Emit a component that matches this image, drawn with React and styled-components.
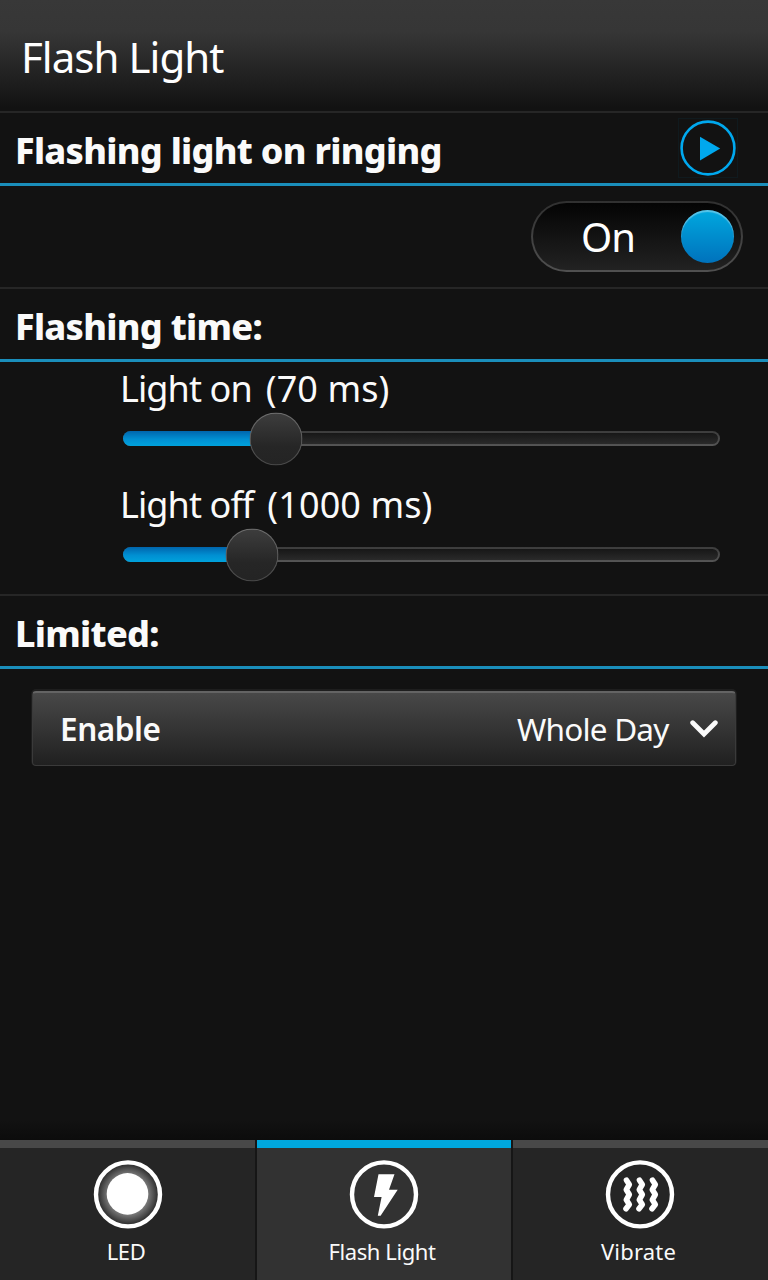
import React, { useState } from 'react';
import styled, { createGlobalStyle } from 'styled-components';

const sliders = [
    {id: 'on', name: 'Light on', value: '(70 ms)', percent: 25.4},
    {id: 'off', name: 'Light off', value: '(1000 ms)', percent: 21.5},
];

const LedIcon = () => (
    <svg width='70' height='70' viewBox='0 0 70 70'>
        <defs>
            <radialGradient id='glow'>
                <stop offset='0.62' stopColor='#7c7c7c' />
                <stop offset='0.95' stopColor='#2c2c2c' />
            </radialGradient>
        </defs>
        <circle cx='35' cy='35.4' r='32' fill='url(#glow)' stroke='#fff' strokeWidth='4.4' />
        <circle cx='34.5' cy='34.9' r='20.8' fill='#fff' />
    </svg>
);

const FlashIcon = () => (
    <svg width='70' height='70' viewBox='0 0 70 70'>
        <circle cx='35' cy='35.4' r='32' fill='none' stroke='#fff' strokeWidth='4.4' />
        <path d='M29.5 15.2 H45.5 L40 30.8 H48.7 L31.6 56.7 H28.8 L32.6 37.9 H25 Z' fill='#fff' />
    </svg>
);

const VibrateIcon = () => (
    <svg width='70' height='70' viewBox='0 0 70 70'>
        <circle cx='35' cy='35.4' r='32' fill='none' stroke='#fff' strokeWidth='4.4' />
        {[0, 13, 26].map(x =>
            <path
                key={x}
                d='M21.5 21.2 L24.3 25.5 L21.3 30.7 L24.3 35.5 L21.3 40.8 L24.3 45.5 L21 49.8'
                transform={`translate(${x} 0)`}
                fill='none'
                stroke='#fff'
                strokeWidth='5.6'
                strokeLinecap='round'
                strokeLinejoin='round'
            />
        )}
    </svg>
);

const tabs = [
    {name: 'LED', icon: LedIcon, spacing: '-0.4px', shift: '3px'},
    {name: 'Flash Light', icon: FlashIcon, spacing: '-0.4px', shift: '4px'},
    {name: 'Vibrate', icon: VibrateIcon, spacing: '0.2px', shift: '3px'},
];

const App = () => {
    const [active, setActive] = useState('Flash Light');

    return (
        <Page>
            <GlobalStyle />
            <Header>
                <Title>Flash Light</Title>
            </Header>
            <SectionHeader>
                <SectionTitle>Flashing light on ringing</SectionTitle>
                <PlayButton aria-label='Play'>
                    <svg width='60' height='60' viewBox='0 0 60 60'>
                        <circle cx='30' cy='30' r='26.4' fill='none' stroke='#00a8ee' strokeWidth='2.6' />
                        <path d='M22 18.8 L42.2 30.5 L22 42.5 Z' fill='#00a8ee' />
                    </svg>
                </PlayButton>
            </SectionHeader>
            <ToggleRow>
                <Toggle>
                    <ToggleLabel>On</ToggleLabel>
                    <ToggleKnob />
                </Toggle>
            </ToggleRow>
            <SectionHeader>
                <SectionTitle>Flashing time:</SectionTitle>
            </SectionHeader>
            <SliderList>
                {sliders.map(s =>
                    <SliderItem key={s.id}>
                        <SliderLabel>
                            <SliderName>{s.name}</SliderName>
                            <SliderValue>{s.value}</SliderValue>
                        </SliderLabel>
                        <Track>
                            <Fill style={{width: `${s.percent}%`}} />
                            <Thumb style={{left: `${s.percent}%`}} />
                        </Track>
                    </SliderItem>
                )}
            </SliderList>
            <SectionHeader>
                <SectionTitle>Limited:</SectionTitle>
            </SectionHeader>
            <Dropdown>
                <DropdownName>Enable</DropdownName>
                <DropdownValue>Whole Day</DropdownValue>
                <svg width='28' height='18' viewBox='0 0 28 18'>
                    <path d='M2.7 2.8 L14 14 L25.3 2.8' fill='none' stroke='#fafafa' strokeWidth='4.8' strokeLinecap='round' />
                </svg>
            </Dropdown>
            <Spacer />
            <TabBar>
                {tabs.map(({name, icon: Icon, spacing, shift}) =>
                    <Tab key={name} $active={name === active} onClick={() => setActive(name)}>
                        <Icon />
                        <TabName $spacing={spacing} $shift={shift}>{name}</TabName>
                    </Tab>
                )}
            </TabBar>
        </Page>
    );
};

const GlobalStyle = createGlobalStyle`
    body {
        margin: 0;
        background: #121212;
    }

    * {
        box-sizing: border-box;
    }

    svg {
        display: block;
        flex: none;
    }
`;

const Page = styled.div`
    display: flex;
    flex-direction: column;
    width: 768px;
    height: 1280px;
    overflow: hidden;
    background: #121212;
    color: #fafafa;
    font-family: 'Noto Sans', 'Open Sans', sans-serif;
    white-space: nowrap;
`;

const Header = styled.header`
    height: 111px;
    padding: 28px 0 0 21px;
    background: linear-gradient(#383838 0, #363636 32px, #121212 108px);
`;

const Title = styled.h1`
    margin: 0;
    font-size: 42px;
    line-height: 57px;
    font-weight: 400;
    letter-spacing: -0.95px;
    color: #fff;
`;

const SectionHeader = styled.div`
    display: flex;
    justify-content: space-between;
    height: 75px;
    padding: 5px 30px 0 15px;
    border-top: 2px solid #262626;
    border-bottom: 3px solid #1a8ebb;
`;

const SectionTitle = styled.h2`
    margin: 0;
    font-size: 36px;
    line-height: 66px;
    font-weight: 800;
    letter-spacing: -0.7px;
`;

const PlayButton = styled.button`
    width: 60px;
    height: 60px;
    padding: 0;
    border: none;
    background: none;
    box-shadow: inset 0 0 0 1px #101a1e;
`;

const ToggleRow = styled.div`
    display: flex;
    justify-content: flex-end;
    height: 101px;
    padding: 15px 25px 0 0;
`;

const Toggle = styled.div`
    display: flex;
    align-items: center;
    justify-content: space-between;
    width: 212px;
    height: 71px;
    padding: 0 7px 0 48px;
    border: 2px solid transparent;
    border-radius: 36px;
    background:
        linear-gradient(#040404, #222) padding-box,
        linear-gradient(#303030, #505050) border-box;
`;

const ToggleLabel = styled.span`
    font-size: 40px;
    line-height: 54px;
    letter-spacing: -1px;
    color: #fff;
`;

const ToggleKnob = styled.div`
    width: 53px;
    height: 53px;
    border-radius: 50%;
    background: linear-gradient(#00a8df, #0072bc);
    box-shadow: inset 0 2px 1px rgba(255, 255, 255, 0.35);
`;

const SliderList = styled.div`
    height: 232px;
    padding: 0 48px 0 121px;
`;

const SliderItem = styled.div`
    height: 116px;
    padding-left: 2px;
`;

const SliderLabel = styled.div`
    display: flex;
    height: 69px;
    margin-left: -3px;
    padding-top: 3px;
    font-size: 36px;
    line-height: 48px;
`;

const SliderName = styled.span`
    margin-right: 14px;
    letter-spacing: -0.9px;
`;

const SliderValue = styled.span`
    letter-spacing: 0.1px;
`;

const Track = styled.div`
    position: relative;
    height: 15px;
    border: 2px solid transparent;
    border-radius: 8px;
    background:
        linear-gradient(#171717, #2a2a2a) padding-box,
        linear-gradient(#3c3c3c, #555) border-box;
`;

const Fill = styled.div`
    height: 15px;
    margin: -2px;
    border-radius: 8px 0 0 8px;
    background: linear-gradient(#0065ac, #008fd2 55%, #00a2dc);
`;

const Thumb = styled.div`
    position: absolute;
    top: 5.5px;
    width: 53px;
    height: 53px;
    border: 1px solid transparent;
    border-radius: 50%;
    background:
        linear-gradient(#3d3d3d, #262626 65%, #242424) padding-box,
        linear-gradient(#707070, #484848) border-box;
    transform: translate(-50%, -50%);
`;

const Dropdown = styled.div`
    display: flex;
    align-items: center;
    height: 75px;
    margin: 22px 32px 0;
    padding: 0 17px 0 27px;
    border: 1px solid #3a3a3a;
    border-top: 2px solid #646464;
    border-radius: 4px;
    background: linear-gradient(#484848, #202020);
    box-shadow: 0 -1px 0 1px #1e1e1e;
`;

const DropdownName = styled.span`
    flex: 1;
    margin-top: -2px;
    font-size: 31.5px;
    font-weight: 600;
    letter-spacing: -0.45px;
`;

const DropdownValue = styled.span`
    margin: -2px 21.5px 0 0;
    font-size: 31.5px;
    letter-spacing: -0.8px;
`;

const Spacer = styled.div`
    flex: 1;
    background: linear-gradient(transparent calc(100% - 20px), #0c0c0c);
`;

const TabBar = styled.nav`
    display: grid;
    grid-template-columns: 255px 254px 255px;
    column-gap: 2px;
    height: 140px;
    background: #161616;
`;

const Tab = styled.button`
    display: flex;
    flex-direction: column;
    align-items: center;
    padding: 11px 0 0;
    border: none;
    border-top: 8px solid ${props => props.$active ? '#00a8df' : '#484848'};
    background: ${props => props.$active ? '#323232' : '#252525'};
    color: #fafafa;
    font-family: inherit;

    &:last-child {
        padding-right: 1px;
    }
`;

const TabName = styled.span`
    margin-top: 7px;
    padding-right: ${props => props.$shift};
    font-size: 22px;
    line-height: 30px;
    letter-spacing: ${props => props.$spacing};
`;

export default App;
